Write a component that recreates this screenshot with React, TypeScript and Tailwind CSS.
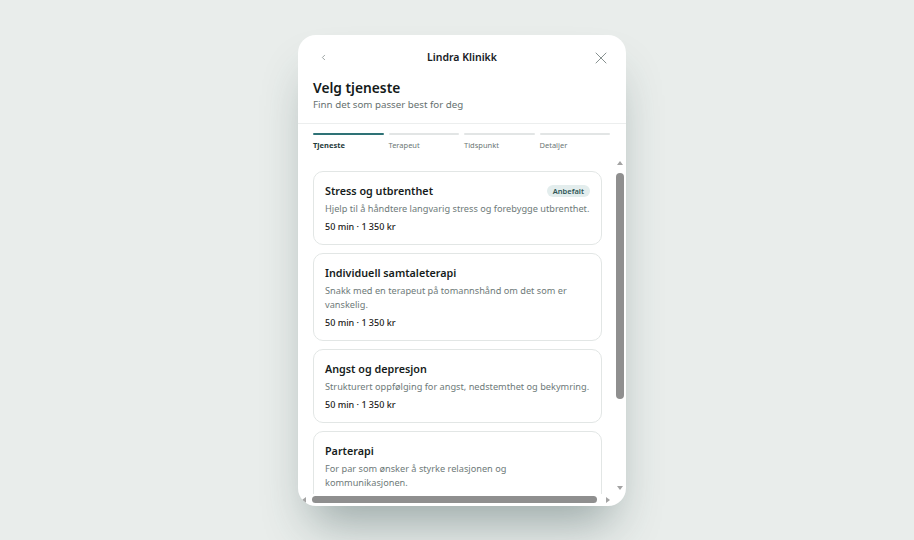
import { X, ChevronLeft } from 'lucide-react'

interface Service {
  title: string
  description: string
  duration: string
  price: string
  recommended?: boolean
}

const services: Service[] = [
  {
    title: 'Stress og utbrenthet',
    description: 'Hjelp til å håndtere langvarig stress og forebygge utbrenthet.',
    duration: '50 min',
    price: '1 350 kr',
    recommended: true,
  },
  {
    title: 'Individuell samtaleterapi',
    description: 'Snakk med en terapeut på tomannshånd om det som er vanskelig.',
    duration: '50 min',
    price: '1 350 kr',
  },
  {
    title: 'Angst og depresjon',
    description: 'Strukturert oppfølging for angst, nedstemthet og bekymring.',
    duration: '50 min',
    price: '1 350 kr',
  },
  {
    title: 'Parterapi',
    description: 'For par som ønsker å styrke relasjonen og kommunikasjonen.',
    duration: '80 min',
    price: '1 950 kr',
  },
]

const steps = ['Tjeneste', 'Terapeut', 'Tidspunkt', 'Detaljer']

function ServiceCard({ service }: { service: Service }) {
  return (
    <button className="w-full shrink-0 rounded-[10px] border border-[#e2e6e5] bg-white px-[11px] pb-[10px] pt-[11px] text-left">
      <div className="flex items-center justify-between">
        <span className="text-[10.75px] font-semibold leading-[16px] text-[#161c1b]">{service.title}</span>
        {service.recommended && (
          <span className="rounded-full bg-[#e3eded] px-[6px] text-[7.5px] font-semibold leading-[12px] text-[#2f5656]">
            Anbefalt
          </span>
        )}
      </div>
      <p className="mt-[3px] text-[9.2px] leading-[14px] text-[#6e7a79]">{service.description}</p>
      <p className="mt-[4px] text-[9px] font-medium leading-[14px] text-[#1c2221]">
        {service.duration} · {service.price}
      </p>
    </button>
  )
}

function Arrow({ dir }: { dir: 'up' | 'down' | 'left' | 'right' }) {
  const points = {
    up: '3,1 6,5 0,5',
    down: '0,1 6,1 3,5',
    left: '5,0 5,6 1,3',
    right: '1,0 1,6 5,3',
  }[dir]
  return (
    <svg width="6" height="6" viewBox="0 0 6 6">
      <polygon points={points} fill="#a3a3a3" />
    </svg>
  )
}

export default function App() {
  return (
    <div
      className="flex h-[540px] w-full items-center justify-center bg-[#e9edeb] pl-[10px]"
      style={{ fontFamily: '"Noto Sans", sans-serif' }}
    >
      <div className="flex h-[471px] w-[328px] flex-col overflow-hidden rounded-[18px] bg-white shadow-[0_30px_48px_-14px_rgba(40,70,70,0.42)]">
        {/* header */}
        <div className="border-b border-[#eceeee] px-[15px] pb-[11px] pt-[11px]">
          <div className="flex h-6 items-center justify-between">
            <button className="flex h-5 w-5 items-center justify-center text-[#7c8786]">
              <ChevronLeft size={9} strokeWidth={2} />
            </button>
            <span className="text-[10.5px] font-semibold text-[#17201f]">Lindra Klinikk</span>
            <button className="flex h-5 w-5 items-center justify-center text-[#7c8786]">
              <X size={22} strokeWidth={1.1} />
            </button>
          </div>
          <h1 className="mt-[8px] text-[13.75px] font-semibold leading-5 text-[#141a19]">Velg tjeneste</h1>
          <p className="text-[9.75px] leading-[14px] text-[#66716f]">Finn det som passer best for deg</p>
        </div>

        {/* steps */}
        <div className="grid grid-cols-4 gap-[5px] pl-[15px] pr-[16px] pt-[9px]">
          {steps.map((step, i) => (
            <div key={step} className="flex flex-col gap-[5px]">
              <div className={i === 0 ? 'h-[2.5px] rounded-full bg-[#2e7276]' : 'h-[2.5px] rounded-full bg-[#e2e5e5]'} />
              <span
                className={
                  i === 0
                    ? 'text-[7.5px] font-bold leading-[10px] text-[#1f3b3b]'
                    : 'text-[7.5px] leading-[10px] text-[#6b7675]'
                }
              >
                {step}
              </span>
            </div>
          ))}
        </div>

        {/* service list with its scrollbars */}
        <div className="mt-[7px] flex min-h-0 flex-1">
          <div className="flex min-w-0 flex-1 flex-col">
            <div className="flex min-h-0 flex-1 flex-col gap-2 overflow-hidden pl-[15px] pr-[12px] pt-[14px]">
              {services.map((s) => (
                <ServiceCard key={s.title} service={s} />
              ))}
            </div>
            <div className="flex h-[12px] items-center">
              <div className="flex w-[12px] justify-center">
                <Arrow dir="left" />
              </div>
              <div className="flex flex-1 items-center pl-[2px] pr-[5px]">
                <div className="h-[7px] w-full rounded-full bg-[#8f8f8f]" />
              </div>
              <div className="flex w-[12px] justify-center">
                <Arrow dir="right" />
              </div>
            </div>
          </div>
          <div className="flex w-[12px] flex-col">
            <div className="flex h-[12px] items-center justify-center">
              <Arrow dir="up" />
            </div>
            <div className="flex flex-1 flex-col px-[2px] pb-[83px] pt-[4px]">
              <div className="w-[8px] flex-1 rounded-full bg-[#8f8f8f]" />
            </div>
            <div className="flex h-[12px] items-center justify-center">
              <Arrow dir="down" />
            </div>
            <div className="h-[12px]" />
          </div>
        </div>
      </div>
    </div>
  )
}
